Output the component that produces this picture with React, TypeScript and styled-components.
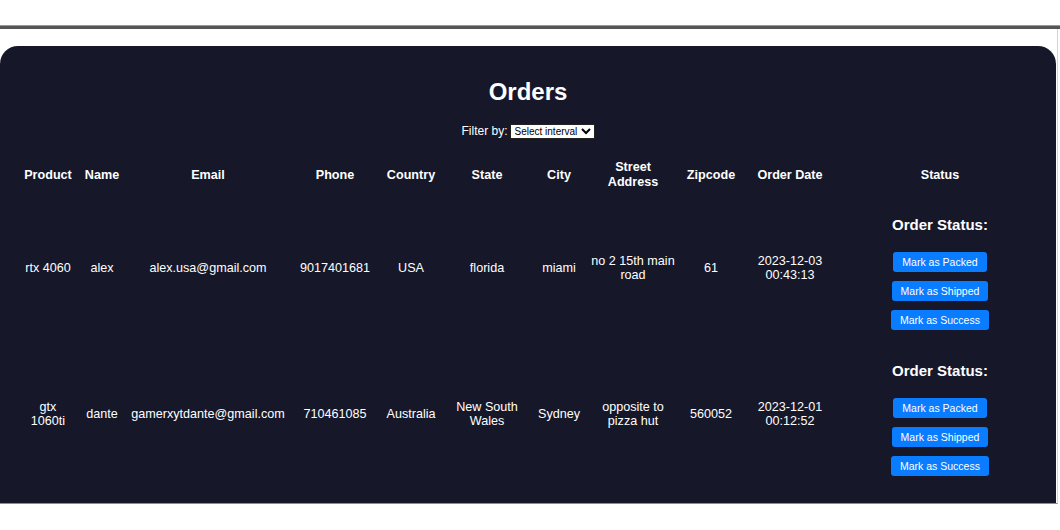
import React from "react";
import styled, { createGlobalStyle } from "styled-components";

const Global = createGlobalStyle`
  html, body { margin: 0; padding: 0; background: #fff; }
  body { font-family: "Liberation Sans", Arial, sans-serif; }
`;

const TopBar = styled.div`
  height: 26px;
  border-bottom: 3px solid #555;
  box-shadow: 0 -1px 0 #999 inset;
`;

const Viewport = styled.div`
  width: 1058px;
  height: 475px;
  padding-top: 17px;
  box-sizing: border-box;
  border-right: 1px solid #d4d4d8;
  border-bottom: 1px solid #8a8a9c;
  overflow: hidden;
`;

const Panel = styled.section`
  width: 1056px;
  min-height: 520px;
  background: #16182a;
  border-radius: 18px 18px 0 0;
  color: #fff;
  padding-top: 31px;
  box-sizing: border-box;
`;

const Title = styled.h2`
  margin: 0;
  font-size: 24px;
  line-height: 30px;
  font-weight: 700;
  text-align: center;
`;

const FilterRow = styled.div`
  margin-top: 16px;
  display: flex;
  justify-content: center;
  align-items: center;
  height: 16px;
  font-size: 12px;
  gap: 2px;
`;

const Select = styled.select`
  font-family: "Liberation Sans", Arial, sans-serif;
  font-size: 10px;
  height: 15px;
  padding: 0;
  border: 1px solid #222;
  border-radius: 0;
  background: #fff;
  color: #000;
`;

const Table = styled.table`
  margin: 16px 0 0 18px;
  width: 1024px;
  table-layout: fixed;
  border-collapse: collapse;
  font-size: 12.6px;
  line-height: 15px;
  text-align: center;
`;

const Th = styled.th`
  padding: 5px 4px;
  font-weight: 700;
  vertical-align: middle;
`;

const Td = styled.td`
  padding: 0 4px;
  vertical-align: middle;
  line-height: 14px;
`;

const StatusCell = styled.td`
  padding: 21px 4px 11px;
  vertical-align: top;
`;

const StatusBox = styled.div`
  display: flex;
  flex-direction: column;
  align-items: center;
  gap: 9px;
`;

const StatusTitle = styled.h3`
  margin: 0 0 9px;
  font-size: 15px;
  line-height: 18px;
  font-weight: 700;
`;

const ActionButton = styled.button`
  height: 20px;
  padding: 0 9px;
  border: none;
  border-radius: 3px;
  background: #0a7cff;
  color: #fff;
  font-family: "Liberation Sans", Arial, sans-serif;
  font-size: 10.5px;
  cursor: pointer;
`;

const widths = [60, 48, 164, 90, 62, 90, 54, 94, 62, 96, 204];
const headers = [
  "Product",
  "Name",
  "Email",
  "Phone",
  "Country",
  "State",
  "City",
  "Street Address",
  "Zipcode",
  "Order Date",
  "Status",
];

const orders = [
  {
    product: "rtx 4060",
    name: "alex",
    email: "alex.usa@gmail.com",
    phone: "9017401681",
    country: "USA",
    state: "florida",
    city: "miami",
    street: "no 2 15th main road",
    zip: "61",
    date: "2023-12-03 00:43:13",
  },
  {
    product: "gtx 1060ti",
    name: "dante",
    email: "gamerxytdante@gmail.com",
    phone: "710461085",
    country: "Australia",
    state: "New South Wales",
    city: "Sydney",
    street: "opposite to pizza hut",
    zip: "560052",
    date: "2023-12-01 00:12:52",
  },
];

export default function App() {
  return (
    <>
      <Global />
      <TopBar />
      <Viewport>
        <Panel>
          <Title>Orders</Title>
          <FilterRow>
            <span>Filter by:</span>
            <Select defaultValue="">
              <option value="">Select interval</option>
              <option value="day">Today</option>
              <option value="week">This week</option>
              <option value="month">This month</option>
            </Select>
          </FilterRow>
          <Table>
            <colgroup>
              {widths.map((w, i) => (
                <col key={i} style={{ width: w }} />
              ))}
            </colgroup>
            <thead>
              <tr>
                {headers.map((h) => (
                  <Th key={h}>{h}</Th>
                ))}
              </tr>
            </thead>
            <tbody>
              {orders.map((o) => (
                <tr key={o.email}>
                  <Td>{o.product}</Td>
                  <Td>{o.name}</Td>
                  <Td>{o.email}</Td>
                  <Td>{o.phone}</Td>
                  <Td>{o.country}</Td>
                  <Td>{o.state}</Td>
                  <Td>{o.city}</Td>
                  <Td>{o.street}</Td>
                  <Td>{o.zip}</Td>
                  <Td>{o.date}</Td>
                  <StatusCell>
                    <StatusBox>
                      <StatusTitle>Order Status:</StatusTitle>
                      <ActionButton>Mark as Packed</ActionButton>
                      <ActionButton>Mark as Shipped</ActionButton>
                      <ActionButton>Mark as Success</ActionButton>
                    </StatusBox>
                  </StatusCell>
                </tr>
              ))}
            </tbody>
          </Table>
        </Panel>
      </Viewport>
    </>
  );
}
